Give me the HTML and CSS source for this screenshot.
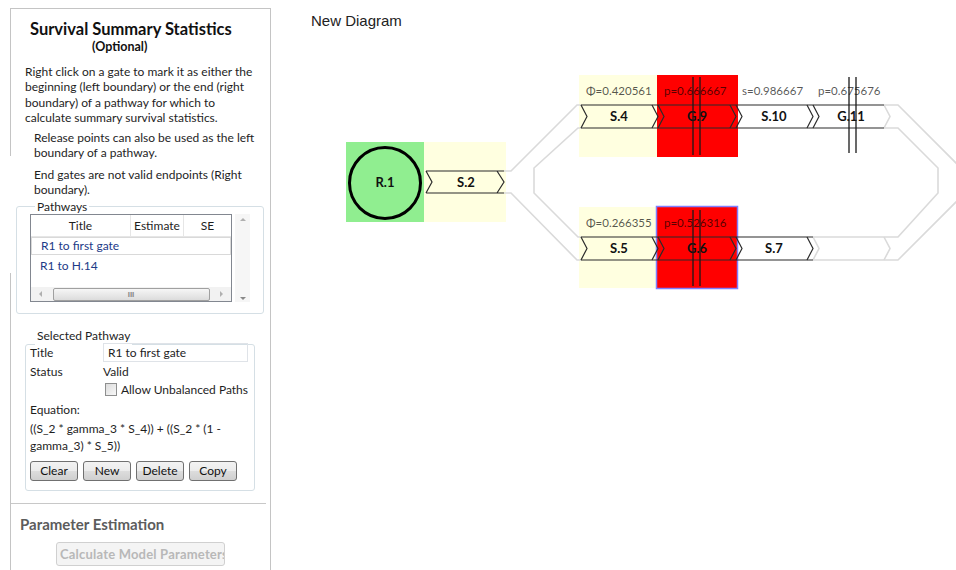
FILE: index.html
```html
<!DOCTYPE html>
<html lang="en">
<head>
  <meta charset="UTF-8" />
  <title>Survival Summary Statistics</title>
  <link rel="stylesheet" href="styles.css">
</head>

<body>
  <div class="app">
    <aside class="side">
      <div class="side-title">Survival Summary Statistics</div>
      <div class="side-sub">(Optional)</div>
      <p class="intro">Right click on a gate to mark it as either the beginning (left boundary) or the end (right boundary) of a pathway for which to calculate summary survival statistics.</p>
      <p class="note">Release points can also be used as the left boundary of a pathway.</p>
      <p class="note">End gates are not valid endpoints (Right boundary).</p>

      <div class="group pathways">
        <div class="group-head">Pathways</div>
        <div class="list-wrap">
          <div class="list">
            <div class="list-head">
              <span class="col-title">Title</span>
              <span class="col-est">Estimate</span>
              <span class="col-se">SE</span>
            </div>
            <div class="list-row focus">R1 to first gate</div>
            <div class="list-row">R1 to H.14</div>
            <div class="hscroll">
              <span class="arrow arrow-left"></span>
              <span class="thumb">III</span>
              <span class="arrow arrow-right"></span>
            </div>
          </div>
          <div class="vscroll">
            <span class="arrow arrow-up"></span>
            <span class="arrow arrow-down"></span>
          </div>
        </div>
      </div>

      <div class="group selected">
        <div class="group-head">Selected Pathway</div>
        <div class="form">
          <span class="form-label">Title</span>
          <div class="textbox">R1 to first gate</div>
          <span class="form-label">Status</span>
          <span class="form-value">Valid</span>
          <span></span>
          <label class="check"><span class="check-box"></span>Allow Unbalanced Paths</label>
        </div>
        <div class="eq-label">Equation:</div>
        <div class="eq-text">((S_2 * gamma_3 * S_4)) + ((S_2 * (1 - gamma_3) * S_5))</div>
        <div class="btn-row">
          <button class="btn">Clear</button>
          <button class="btn">New</button>
          <button class="btn">Delete</button>
          <button class="btn">Copy</button>
        </div>
      </div>

      <div class="sep"></div>
      <div class="section-title">Parameter Estimation</div>
      <button class="btn-calc" disabled>Calculate Model Parameters</button>
    </aside>

    <main class="canvas">
      <div class="canvas-title">New Diagram</div>
      <svg class="diagram" viewBox="270 30 686 540" width="686" height="540">
        <!-- node backgrounds -->
        <rect x="345" y="142" width="78" height="80" fill="#90ee90"/>
        <rect x="423" y="142" width="82" height="80" fill="#ffffe0"/>
        <rect x="578" y="75" width="78" height="82" fill="#ffffe0"/>
        <rect x="656" y="75" width="81" height="82" fill="#ff0000"/>
        <rect x="578" y="207" width="77" height="81" fill="#ffffe0"/>
        <rect x="655.5" y="206.5" width="81" height="82" fill="#ff0000" stroke="#7f7fff" stroke-width="1.5"/>

        <!-- pipe outline -->
        <g fill="none" stroke="#dadada" stroke-width="1.6">
          <path d="M503 171 H510 L576 105 H580 M883 105 H897 L963 171"/>
          <path d="M503 193 H510 L576 260 H580 M812 260 H897 L963 194"/>
          <path d="M580 128 H577 L533 168 V193 L577 237 H580"/>
          <path d="M883 128 H897 L937 168 V193 L897 237 H812"/>
          <path d="M883 105 L889 116.5 L883 128"/>
          <path d="M812 237 L818 248.5 L812 260 M883 237 L889 248.5 L883 260"/>
        </g>

        <!-- segments -->
        <g fill="none" stroke="#2b2b2b" stroke-width="1.2">
          <path d="M425 171 H503 M425 193 H503 M425 171 L431 182 L425 193 M496 171 L503 182 L496 193"/>
          <path d="M580 105 H883 M580 128 H883"/>
          <path d="M580 105 L586 116.5 L580 128 M657 105 L663 116.5 L657 128 M735 105 L741 116.5 L735 128 M812 105 L818 116.5 L812 128"/>
          <path d="M651 105 L657 116.5 L651 128 M729 105 L735 116.5 L729 128 M806 105 L812 116.5 L806 128"/>
          <path d="M580 237 H812 M580 260 H812"/>
          <path d="M580 237 L586 248.5 L580 260 M657 237 L663 248.5 L657 260 M735 237 L741 248.5 L735 260"/>
          <path d="M651 237 L657 248.5 L651 260 M729 237 L735 248.5 L729 260 M806 237 L812 248.5 L806 260"/>
        </g>

        <circle cx="384" cy="183" r="35.5" fill="none" stroke="#000" stroke-width="3"/>

        <g class="node-text" text-anchor="middle">
          <text x="384" y="187">R.1</text>
          <text x="465" y="187">S.2</text>
          <text x="618" y="121">S.4</text>
          <text x="696" y="121">G.9</text>
          <text x="773" y="121">S.10</text>
          <text x="850" y="121">G.11</text>
          <text x="618" y="253">S.5</text>
          <text x="696" y="253">G.6</text>
          <text x="773" y="253">S.7</text>
        </g>

        <g class="value-text">
          <text x="585" y="95">Φ=0.420561</text>
          <text x="663" y="95">p=0.666667</text>
          <text x="741" y="95">s=0.986667</text>
          <text x="817" y="95">p=0.675676</text>
          <text x="585" y="227">Φ=0.266355</text>
          <text x="663" y="227">p=0.526316</text>
        </g>

        <!-- gate markers -->
        <g stroke="#1a1a1a" stroke-width="1.3">
          <path d="M692 77 V155 M699 77 V155"/>
          <path d="M848 77 V153 M855 77 V153"/>
          <path d="M692 210 V286 M699 210 V286"/>
        </g>
      </svg>
    </main>
  </div>
</body>
</html>
```

FILE: styles.css
```css
html, body {
  margin: 0;
  height: 100%;
  overflow: hidden;
  background: #fff;
}

.app {
  display: flex;
  font-family: Lato, "Open Sans", sans-serif;
  font-size: 12px;
  color: #1e1e1e;
}

/* left panel */
.side {
  width: 259px;
  height: 100vh;
  margin: 8px 0 0 10px;
  padding-left: 1px;
  border-top: 1px solid #c4c4c4;
  border-right: 1px solid #c4c4c4;
  background: linear-gradient(to bottom, #c4c4c4 0 147px, transparent 147px 264px, #c4c4c4 264px) left top / 1px 100% no-repeat, #fff;
  flex-shrink: 0;
}

.side-title {
  padding: 10px 0 0 19px;
  font-size: 16.5px;
  font-weight: bold;
  line-height: 20px;
  color: #111;
}

.side-sub {
  padding-left: 81px;
  font-size: 12.5px;
  font-weight: bold;
  line-height: 16px;
  color: #111;
}

.intro, .note {
  margin: 0;
  line-height: 15.3px;
}

.intro {
  margin: 9px 14px 0 14px;
}

.note {
  margin: 5px 14px 0 23px;
}

.note + .note {
  margin-top: 6px;
}

.group {
  border: 1px solid #d5dfe5;
  border-radius: 3px;
}

.group-head {
  width: max-content;
  margin: -8px 0 0 5px;
  padding: 0 2px;
  line-height: 15px;
  background: #fff;
}

.pathways {
  margin: 9px 6px 0 5px;
  padding: 0 0 11px 13px;
}

.list-wrap {
  display: flex;
  gap: 3px;
}

.list {
  width: 200px;
  height: 86px;
  border: 1px solid #828790;
  display: flex;
  flex-direction: column;
}

.list-head {
  display: flex;
  height: 21px;
  line-height: 21px;
  border-bottom: 1px solid #e6e6e6;
  text-align: center;
}

.col-title { width: 99px; border-right: 1px solid #e6e6e6; }
.col-est { width: 52px; border-right: 1px solid #e6e6e6; }
.col-se { flex: 1; }

.list-row {
  height: 20px;
  line-height: 20px;
  padding-left: 9px;
  color: #1c3a87;
}

.list-row.focus {
  height: 16px;
  line-height: 16px;
  border: 1px solid #d9d9d9;
  margin-bottom: 1px;
}

.hscroll {
  margin-top: auto;
  height: 14px;
  display: flex;
  align-items: center;
  background: #f2f2f2;
}

.thumb {
  width: 155px;
  height: 11px;
  margin: 0 auto;
  border: 1px solid #a0a0a0;
  border-radius: 2px;
  background: linear-gradient(#f6f6f6, #dcdcdc);
  font-family: "Liberation Sans", sans-serif;
  font-size: 8px;
  font-weight: bold;
  line-height: 11px;
  text-align: center;
  color: #888;
}

.arrow {
  width: 0;
  height: 0;
  border: 3px solid transparent;
}

.arrow-left { border-right-color: #b0b0b0; margin-left: 5px; }
.arrow-right { border-left-color: #b0b0b0; margin-right: 5px; }

.vscroll {
  width: 15px;
  height: 88px;
  background: #f6f6f6;
  display: flex;
  flex-direction: column;
  align-items: center;
  justify-content: space-between;
  padding: 4px 0 2px;
  box-sizing: border-box;
}

.arrow-up { border-bottom-color: #b0b0b0; border-top-width: 0; }
.arrow-down { border-top-color: #888; border-bottom-width: 0; }

.selected {
  margin: 30px 15px 0 14px;
  padding: 0 6px 9px 4px;
}

.selected .group-head {
  margin-top: -17.5px;
  padding-bottom: 2px;
}

.form {
  display: grid;
  grid-template-columns: 73px 145px;
  grid-template-rows: 20px 18px 18px;
  align-items: center;
  margin-top: -2px;
}

.textbox {
  height: 17px;
  line-height: 17px;
  align-self: start;
  border: 1px solid #dfe3e8;
  padding-left: 4px;
}

.check {
  display: flex;
  align-items: center;
  gap: 4px;
  padding-left: 2px;
  white-space: nowrap;
}

.check-box {
  width: 11px;
  height: 11px;
  border: 1px solid #8e8f8f;
  background: linear-gradient(135deg, #dcdcdc, #f8f8f8);
}

.eq-label {
  margin-top: 3px;
  line-height: 16px;
}

.eq-text {
  margin-top: 2px;
  line-height: 17px;
  padding-right: 6px;
}

.btn-row {
  display: flex;
  gap: 5px;
  margin-top: 7px;
}

.btn {
  width: 48px;
  height: 20px;
  padding: 0;
  border: 1px solid #707070;
  border-radius: 3px;
  background: linear-gradient(#f3f3f3, #ebebeb 50%, #dddddd 50%, #cfcfcf);
  font: inherit;
  color: #111;
}

.sep {
  margin: 12px 4px 0 0;
  border-top: 1px solid #c8c8c8;
}

.section-title {
  margin-top: 10px;
  padding-left: 9px;
  font-size: 15px;
  font-weight: bold;
  line-height: 20px;
  color: #5c5c5c;
}

.btn-calc {
  display: block;
  width: 169px;
  height: 24px;
  margin: 8px 0 0 45px;
  padding: 0 0 0 3px;
  border: 1px solid #d0d0d0;
  border-radius: 3px;
  background: #f4f4f4;
  font: inherit;
  font-size: 13px;
  font-weight: bold;
  letter-spacing: 0.2px;
  color: #b8b8b8;
  text-align: left;
  white-space: nowrap;
  overflow: hidden;
}

/* diagram area */
.canvas {
  flex: 1;
}

.canvas-title {
  padding: 12px 0 0 40px;
  height: 18px;
  font-family: "Liberation Sans", Arial, sans-serif;
  font-size: 15px;
  line-height: 18px;
  color: #222;
}

.diagram {
  display: block;
}

.node-text {
  font-family: Lato, "Open Sans", sans-serif;
  font-size: 13px;
  font-weight: bold;
  fill: #111;
}

.value-text {
  font-family: Lato, "Open Sans", sans-serif;
  font-size: 11.5px;
  fill: #000;
  fill-opacity: 0.68;
}
```
